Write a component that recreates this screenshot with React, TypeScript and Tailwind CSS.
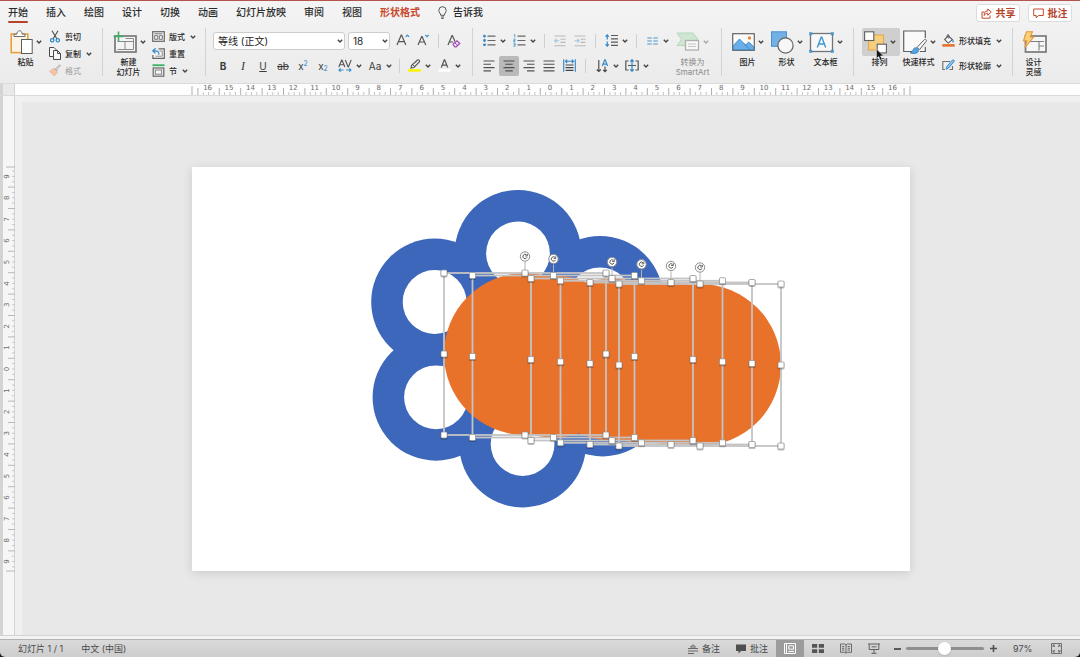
import type { ReactNode } from "react";

/* ---------- shared pieces ---------- */

function Chevron({ faded = false }: { faded?: boolean }) {
  return (
    <svg className="h-2 w-2 shrink-0" viewBox="0 0 8 8" fill="none" stroke={faded ? "#a8a8a8" : "#454545"} strokeWidth="1.4">
      <path d="M1.8 2.8 4 5.1 6.2 2.8" />
    </svg>
  );
}

function Tool({ label, active, split, children }: { label: string; active?: boolean; split?: boolean; children: ReactNode }) {
  return (
    <button type="button" aria-label={label} className={split ? "flex h-5 w-[30px] shrink-0 items-center" : "flex h-5 shrink-0 items-center"}>
      <span className={active ? "flex h-5 w-5 items-center justify-center rounded-xs bg-[#b9b9b9]" : "flex h-5 w-5 items-center justify-center"}>
        {children}
      </span>
      {split && <Chevron />}
    </button>
  );
}

function Divider() {
  return <span className="h-12 w-px shrink-0 bg-[#d3d3d3]" />;
}

function ShortDivider() {
  return <span className="h-3.5 w-px shrink-0 bg-[#cfcfcf]" />;
}

function BigTool({ label, icon, hot, split = true, muted, children }: { label: ReactNode; icon: ReactNode; hot?: boolean; split?: boolean; muted?: boolean; children?: ReactNode }) {
  return (
    <button type="button" className="relative flex w-[39px] shrink-0 flex-col items-center gap-px">
      <span className={hot ? "flex h-7 w-[38px] items-center justify-center gap-0.5 rounded-xs bg-[#cfcfcf]" : "flex h-7 w-[38px] items-center justify-center gap-0.5"}>
        {icon}
        {split && <Chevron faded={muted} />}
      </span>
      <span className={muted ? "text-[8px] leading-[10px] whitespace-nowrap text-[#8a8a8a]" : "pr-0.5 text-[8px] leading-[10px] font-medium whitespace-nowrap"}>{label}</span>
      {children}
    </button>
  );
}

function SmallTool({ label, icon, split, muted }: { label: string; icon: ReactNode; split?: boolean; muted?: boolean }) {
  return (
    <button type="button" className={muted ? "flex h-[17px] items-center gap-1 text-[8px] text-[#9a9a9a]" : "flex h-[17px] items-center gap-1 text-[8px] font-medium"}>
      {icon}
      <span className="whitespace-nowrap">{label}</span>
      {split && <Chevron />}
    </button>
  );
}

/* ---------- icons ---------- */

const PasteIcon = () => (
  <svg className="h-[25px] w-[23px]" viewBox="0 0 23 25" fill="none">
    <rect x="1.2" y="4" width="16.6" height="18.6" fill="#fbf3e6" stroke="#e9a13e" strokeWidth="1.6" />
    <path d="M4 6.500V4.200h2.800C7 2 8 .8 9.500.8s2.500 1.200 2.700 3.400H15v2.300z" fill="#fff" stroke="#6b6b6b" />
    <rect x="11.500" y="9.500" width="10.700" height="14" fill="#fff" stroke="#5b5b5b" />
  </svg>
);

const CutIcon = () => (
  <svg className="h-[13px] w-3" viewBox="0 0 12 13" fill="none">
    <path d="M3 .8 8 9M9 .8 4 9" stroke="#4c4c4c" strokeWidth="1.100" />
    <circle cx="3.200" cy="10.300" r="1.700" stroke="#2f86c8" strokeWidth="1.200" />
    <circle cx="8.800" cy="10.300" r="1.700" stroke="#2f86c8" strokeWidth="1.200" />
  </svg>
);

const CopyIcon = () => (
  <svg className="h-[13px] w-3" viewBox="0 0 12 13" fill="#f8f8f8" stroke="#4a4a4a" strokeWidth="1">
    <path d="M.5.500h4.500l2 2V9.500H.5z" />
    <path d="M4.500 3.500h4l3 3v6h-7z" />
    <path d="M8.500 3.500v3h3" fill="none" />
  </svg>
);

const BrushIcon = () => (
  <svg className="h-[13px] w-3" viewBox="0 0 12 13" fill="none">
    <path d="M.5 7.300 5 4.300l3.500 4L5.200 12Z" fill="#f3c4a8" stroke="#eab497" strokeWidth=".8" />
    <path d="m6 5 2-1.800L10.800.8l.8 1-2.800 2.500L7.800 7Z" fill="#d9d9d9" stroke="#aaa" strokeWidth=".8" />
  </svg>
);

const NewSlideIcon = () => (
  <svg className="h-[23px] w-6" viewBox="0 0 24 23" fill="none">
    <rect x="2" y="5" width="21" height="16" fill="#f4f4f4" stroke="#808080" strokeWidth="1.800" />
    <path d="M4.500 10.500h16M12 10.500v8M4.500 18.500h16v-11h-8" stroke="#8a8a8a" />
    <path d="M5.500.5v10M.5 5.500h10" stroke="#3cb163" strokeWidth="1.600" />
  </svg>
);

const LayoutIcon = () => (
  <svg className="h-[11px] w-[13px]" viewBox="0 0 13 11" fill="#f4f4f4" stroke="#666">
    <rect x=".7" y=".7" width="11.600" height="9.600" strokeWidth="1.200" />
    <path d="M2.500 2.800h8M2.700 4.700h3.100v3.600H2.700zM7.300 4.700h3.100v3.600H7.300z" strokeWidth=".9" />
  </svg>
);

const ResetIcon = () => (
  <svg className="h-[11px] w-[13px]" viewBox="0 0 13 11" fill="none">
    <path d="M6.500.9h5.800v9.400H.9V7" fill="#f4f4f4" stroke="#666" strokeWidth="1.200" />
    <path d="M7.500 3h2.800v5.200H3.500" stroke="#888" strokeWidth=".9" />
    <path d="M3.600.3.800 2.900l2.800 2.500M1 2.900h2.600C6 2.900 7 4.300 6.800 6.700" stroke="#2f86c8" strokeWidth="1.200" />
  </svg>
);

const SectionIcon = () => (
  <svg className="h-[13px] w-[13px]" viewBox="0 0 13 13" fill="none">
    <path d="M.5 1.200h12" stroke="#3cb163" strokeWidth="1.800" />
    <rect x="1.200" y="4" width="10.600" height="8.200" fill="#f4f4f4" stroke="#666" strokeWidth="1.200" />
    <rect x="3.300" y="6" width="6.400" height="4.200" stroke="#777" strokeWidth=".9" />
  </svg>
);

const ListIcon = ({ numbered = false }: { numbered?: boolean }) => (
  <svg className="h-[13px] w-[13px]" viewBox="0 0 13 13" fill="none">
    <path d="M4.500 2.200h8M4.500 6.500h8M4.500 10.800h8" stroke="#666" strokeWidth="1.200" />
    {numbered ? (
      <path d="M.8 1 1.800.6v3M.5 5.200h1.600v1.300H.7v1.300h1.500M.5 9.300h1.600v3H.5M.8 10.800h1.300" stroke="#3a8fca" strokeWidth=".8" />
    ) : (
      <path d="M.1 2.200a1.400 1.400 0 1 0 2.800 0 1.400 1.400 0 0 0-2.800 0M.1 6.500a1.400 1.400 0 1 0 2.800 0 1.400 1.400 0 0 0-2.800 0M.1 10.800a1.400 1.400 0 1 0 2.800 0 1.400 1.400 0 0 0-2.800 0" fill="#2f86c8" />
    )}
  </svg>
);

const IndentIcon = ({ out = false }: { out?: boolean }) => (
  <svg className="h-3 w-3" viewBox="0 0 12 12" fill="none">
    <path d="M.5 1h11M6.500 4.200h5M6.500 7.400h5M.5 10.700h11" stroke="#b9b9b9" strokeWidth="1.100" />
    <path d={out ? "M5.200 5.800H.8M2.500 4 .7 5.800l1.800 1.800" : "M.5 5.800h4.500M3.300 4l1.800 1.800-1.800 1.800"} stroke="#9cc6e4" strokeWidth="1.100" />
  </svg>
);

const LineSpacingIcon = () => (
  <svg className="h-[13px] w-[13px]" viewBox="0 0 13 13" fill="none">
    <path d="M6 1.500h7M6 4.800h7M6 8.100h7M6 11.400h7" stroke="#5a5a5a" strokeWidth="1.200" />
    <path d="M2.200 1v4.500M.6 2.700 2.200 1l1.600 1.700M2.200 7.500V12M.6 10.300 2.200 12l1.600-1.700" stroke="#2f86c8" strokeWidth="1.200" />
  </svg>
);

const ColumnsIcon = () => (
  <svg className="h-2 w-[11px]" viewBox="0 0 11 8" fill="none" stroke="#4a96cc" strokeWidth="1.200">
    <path d="M.3 1h4.500M.3 4h4.500M.3 7h4.500M6.300 1h4.500M6.300 4h4.500M6.300 7h4.500" />
  </svg>
);

const AlignIcon = ({ d }: { d: string }) => (
  <svg className="h-3 w-3" viewBox="0 0 12 12" fill="none" stroke="#505050" strokeWidth="1.100">
    <path d={d} />
  </svg>
);

const DistributeIcon = () => (
  <svg className="h-[13px] w-[13px]" viewBox="0 0 13 13" fill="none">
    <path d="M.7.200v12.600M12.300.200v12.600M2.500 2.300h8M4.200.6 2.400 2.300l1.800 1.800M8.800.6l1.800 1.700-1.800 1.800" stroke="#2f86c8" strokeWidth="1.100" />
    <path d="M2.500 6h8M2.500 8.700h8M2.500 11.400h8" stroke="#444" strokeWidth="1.200" />
  </svg>
);

const TextDirectionIcon = () => (
  <svg className="h-[14px] w-3" viewBox="0 0 12 14" fill="none">
    <path d="M2.800 1v11.500M.8 10.500l2 2 2-2M9 7.500v5M7.200 10.800 9 12.600l1.800-1.800" stroke="#444" strokeWidth="1.100" />
    <path d="M6.300 7 8.700.9h.5L11.600 7M7 5.100h3.800" stroke="#2f86c8" strokeWidth="1.100" />
  </svg>
);

const AlignTextIcon = () => (
  <svg className="h-[13px] w-[14px]" viewBox="0 0 14 13" fill="none">
    <path d="M3.500 2H.8v9h2.700M10.500 2h2.700v9h-2.700M3 6.500h8" stroke="#555" strokeWidth="1.200" />
    <path d="M7 .8v11.400M5.300 2.500 7 .8l1.700 1.700M5.300 10.500 7 12.200l1.700-1.700" stroke="#2f86c8" strokeWidth="1.200" />
  </svg>
);

const SmartArtIcon = () => (
  <svg className="h-5 w-6" viewBox="0 0 24 20" fill="none">
    <path d="M1 1h16l5 6.500-5 6H1L5.500 7.500z" fill="#cfe6d2" stroke="#b5d8bb" />
    <rect x="9.500" y="8.500" width="13" height="9.500" fill="#f7f7f7" stroke="#b0b0b0" strokeWidth="1.300" />
    <path d="M12 12h8M12 14.500h8" stroke="#c4c4c4" />
  </svg>
);

const PictureIcon = () => (
  <svg className="h-[18px] w-[23px]" viewBox="0 0 23 18" fill="none">
    <rect x=".7" y=".7" width="21.600" height="16.600" fill="#fbfbfb" stroke="#646464" strokeWidth="1.200" />
    <path d="M1.300 12.500 7.500 6l6 6 3.300-3 4.900 4.800v2.900H1.300z" fill="#69aee6" stroke="#2f7fc0" strokeWidth=".8" />
    <path d="m12 10.500 5.500 6" stroke="#2f7fc0" strokeWidth=".8" />
    <circle cx="17.500" cy="5" r="1.700" fill="#ef8b3c" />
  </svg>
);

const ShapesIcon = () => (
  <svg className="h-[23px] w-[23px]" viewBox="0 0 23 23">
    <rect x=".5" y=".8" width="15" height="14.500" fill="#72b0e6" stroke="#4a90d0" />
    <circle cx="14.500" cy="14.500" r="7.600" fill="#f7f7f7" stroke="#646464" strokeWidth="1.200" />
  </svg>
);

const TextBoxIcon = () => (
  <svg className="h-[21px] w-[25px]" viewBox="0 0 25 21" fill="none">
    <rect x="1.500" y="1.500" width="22" height="18" fill="#f8f8f8" stroke="#747474" strokeWidth="1.300" />
    <path d="M.2.200h3v3h-3zM21.800.200h3v3h-3zM.2 17.800h3v3h-3zM21.800 17.800h3v3h-3z" fill="#4a96cc" />
    <path d="M8.300 15.500 12.200 5.300h.6l3.900 10.200M9.700 12h5.600" stroke="#3f95cf" strokeWidth="1.400" />
  </svg>
);

const ArrangeIcon = () => (
  <svg className="h-[23px] w-[23px]" viewBox="0 0 23 23" strokeWidth="1.100">
    <rect x="4.500" y="4" width="15" height="15" fill="#f5cf7f" stroke="#eaa64a" />
    <rect x=".6" y=".8" width="9.200" height="8.700" fill="#fdfdfd" stroke="#606060" />
    <rect x="13.200" y="13.200" width="9.200" height="8.700" fill="#fdfdfd" stroke="#606060" />
  </svg>
);

const QuickStyleIcon = () => (
  <svg className="h-6 w-6" viewBox="0 0 24 24" fill="none">
    <path d="M9 21.500H.7V1h21.600v7M22.300 17v4.500H17" fill="#fafafa" stroke="#606060" strokeWidth="1.200" />
    <path d="M22.800 9.500c.9.700.7 1.400.2 2.100l-6.500 8-2.600-2.100 7-7.400c.6-.6 1.200-1 1.900-.6z" fill="#f7f7f7" stroke="#606060" />
    <path d="M7 22.800c2.200-.2 2.600-1.800 3.300-3.500.8-1.700 2.600-2 4-.9 1.700 1.400 1.700 3.100.2 4.200-2 1.400-5.200 1.300-7.500.2z" fill="#5aa2de" stroke="#2f7fc0" strokeWidth=".8" />
  </svg>
);

const FillIcon = () => (
  <svg className="h-[13px] w-[13px]" viewBox="0 0 13 13" fill="none">
    <path d="m6.300 1.800 4 3.800-4 3.500-3.600-3.500z" fill="#fafafa" stroke="#555" strokeWidth="1.100" />
    <path d="M6.800 4.500V1.300c0-.9-1.600-.9-1.600 0v2" stroke="#555" strokeWidth=".9" />
    <path d="M10.800 5c1.200 1.700 1.300 3.400.2 3.600-1-.1-.9-1.500-.2-3.600z" fill="#2f86c8" />
    <path d="M.3 11.400h12.400" stroke="#e8722a" strokeWidth="2.600" />
  </svg>
);

const OutlineIcon = () => (
  <svg className="h-[13px] w-[13px]" viewBox="0 0 13 13" fill="none">
    <path d="M8 2.500H.8v8H3M10.500 7v3.500H7.500" stroke="#707070" strokeWidth="1.100" />
    <path d="m4 10.300.9-2.900L10.500 1c.8-.6 2.200.5 1.600 1.500L6.700 8.900z" fill="#8cc2ec" stroke="#2f86c8" strokeWidth=".9" />
  </svg>
);

const IdeasIcon = () => (
  <svg className="h-[23px] w-[25px]" viewBox="0 0 25 23" fill="none">
    <rect x="3.500" y="5" width="20.500" height="16" fill="#f6f6f6" stroke="#808080" strokeWidth="1.800" />
    <path d="M5 10.500h17M17 10.500v9M17 15h5" stroke="#808080" strokeWidth="1.100" />
    <path d="M4.500.8h6L8.200 6h3.500L3 16.500 4.800 9.800H1.500z" fill="#fad27e" stroke="#e9973a" strokeWidth="1.100" />
  </svg>
);

const HighlighterIcon = () => (
  <svg className="h-[13px] w-[13px]" viewBox="0 0 13 13" fill="none">
    <path d="m3 9 .6-2.600L9.500 1c1-.8 2.700.7 1.800 1.900L6 8.500z" fill="#e8e8e8" stroke="#555" strokeWidth="1.100" />
    <path d="M4.500 5.500 7 7.800" stroke="#555" />
    <path d="M.2 11.400h12.600" stroke="#fdf500" strokeWidth="2.600" />
  </svg>
);

const FontColorIcon = () => (
  <svg className="h-[13px] w-[13px]" viewBox="0 0 13 13" fill="none">
    <path d="M3.300 8.500 6.300.8h.4l3 7.700M4.400 6.200h4.200" stroke="#555" strokeWidth="1.200" />
    <path d="M.5 11.400h12" stroke="#fff" strokeWidth="2.600" />
  </svg>
);

const GrowIcon = ({ down = false }: { down?: boolean }) => (
  <svg className="h-[13px] w-[14px]" viewBox="0 0 14 13" fill="none">
    <path d={down ? "M2 11 5.700 2.500h.4L9.800 11M3.400 8h5" : "M1 11 5.200 1h.4l4.200 10M2.600 7.700h5.700"} stroke="#555" strokeWidth="1.200" />
    <path d={down ? "m9.300 1 1.700 1.700L12.700 1" : "M9.700 2.800 11.400 1l1.700 1.800"} stroke="#3a8fca" strokeWidth="1.200" />
  </svg>
);

const ClearFormatIcon = () => (
  <svg className="h-[14px] w-[14px]" viewBox="0 0 14 14" fill="none">
    <path d="M1 11 5 1.500h.4L8 7.500M2.500 8h3.800" stroke="#555" strokeWidth="1.200" />
    <path d="m6 10.300 4-3.500 2.800 2.700-3.600 3.300H7.800z" fill="#f3e3f7" stroke="#a24fb8" strokeWidth="1.200" />
    <path d="m7.800 8.800 3 2.800" stroke="#a24fb8" />
  </svg>
);

const SpacingIcon = () => (
  <svg className="h-[13px] w-[14px]" viewBox="0 0 14 13" fill="none">
    <path d="M.8 8 3.700 1h.3l2.900 7M1.900 5.800h3.900M7.300 1l2.800 7h.3l2.800-7" stroke="#555" strokeWidth="1.100" />
    <path d="M1 11h4.500M2.600 9.300.9 11l1.700 1.700M8 11h5M11.300 9.300 13 11l-1.700 1.700" stroke="#3a8fca" strokeWidth="1.100" />
  </svg>
);

const BulbIcon = () => (
  <svg className="h-[13px] w-[9px]" viewBox="0 0 9 13" fill="none" stroke="#555">
    <path d="M2.700 9.300C2.700 7.200.8 6.700.8 4.400a3.700 3.700 0 0 1 7.400 0c0 2.300-1.900 2.800-1.900 4.900zM3 11h3M3.300 12.400h2.400" />
  </svg>
);

const ShareIcon = () => (
  <svg className="h-[11px] w-[11px]" viewBox="0 0 11 11" fill="none" stroke="#c2492e">
    <path d="M3.500 4H1v6.200h8V7.500" />
    <path d="M6.800 1v1.900C4 3.200 3 5 3.200 7.500 4 5.900 5 5.300 6.800 5.300v2L10.300 4z" />
  </svg>
);

const CommentIcon = () => (
  <svg className="h-[11px] w-[11px]" viewBox="0 0 11 11" fill="none" stroke="#c2492e">
    <path d="M.7 1h9.600v6.500H5.600L3.200 9.800V7.500H.7z" />
  </svg>
);

const PointerIcon = () => (
  <svg className="absolute top-5 left-[14px] h-3.5 w-2.5" viewBox="0 0 10 14">
    <path d="M1.500 1v9.500l2.200-2 1.500 3.700 1.800-.8-1.500-3.500h3z" fill="#111" stroke="#ddd" strokeWidth=".6" />
  </svg>
);

/* ---------- ribbon ---------- */

const tabs = ["开始", "插入", "绘图", "设计", "切换", "动画", "幻灯片放映", "审阅", "视图"];

function TabBar() {
  return (
    <header className="flex h-[23px] items-start justify-between pt-[3px] pr-2">
      <nav className="flex items-center gap-[18px] pl-2 text-[10px] leading-4 font-medium text-[#2a2a2a]">
        {tabs.map((tab, index) => (
          <a key={tab} href={`#${tab}`} className="relative whitespace-nowrap">
            {tab}
            {index === 0 && <span className="absolute inset-x-0 top-[17px] h-0.5 rounded-full bg-[#b5432a]" />}
          </a>
        ))}
        <a href="#format" className="font-bold whitespace-nowrap text-[#c9472b]">形状格式</a>
        <button type="button" className="flex items-center gap-1.5 whitespace-nowrap">
          <BulbIcon />
          告诉我
        </button>
      </nav>
      <div className="flex gap-2 text-[10px] leading-4 font-bold text-[#b5432a]">
        <button type="button" className="flex h-[18px] w-11 items-center justify-center gap-1 rounded-[3px] border border-[#dcdcdc] bg-white">
          <ShareIcon />
          共享
        </button>
        <button type="button" className="flex h-[18px] w-11 items-center justify-center gap-1 rounded-[3px] border border-[#dcdcdc] bg-white">
          <CommentIcon />
          批注
        </button>
      </div>
    </header>
  );
}

function Picker({ label, value, wide }: { label: string; value: string; wide?: boolean }) {
  return (
    <span className={wide ? "relative flex w-[132px] items-center" : "relative flex w-[42px] items-center"}>
      <select aria-label={label} defaultValue={value} className="h-[18px] w-full appearance-none rounded-[3px] border border-[#cdcdcd] bg-white pr-3 pl-1 text-[10px] leading-4 text-[#222]">
        <option>{value}</option>
      </select>
      <span className="pointer-events-none absolute right-px flex">
        <Chevron />
      </span>
    </span>
  );
}

function FontGroup() {
  return (
    <div className="flex w-[266px] shrink-0 flex-col pl-[7px] text-[#3c3c3c]">
      <div className="flex h-[25px] items-center">
        <div className="flex gap-[3px]">
          <Picker label="字体" value="等线 (正文)" wide />
          <Picker label="字号" value="18" />
        </div>
        <div className="flex items-center pl-[3px]">
          <Tool label="增大字号"><GrowIcon /></Tool>
          <Tool label="减小字号"><GrowIcon down /></Tool>
        </div>
        <div className="flex items-center gap-[5px] pl-[5px]">
          <ShortDivider />
          <Tool label="清除格式"><ClearFormatIcon /></Tool>
        </div>
      </div>
      <div className="flex h-[25px] items-center text-[10px] leading-4">
        <div className="flex">
          <Tool label="加粗"><b>B</b></Tool>
          <Tool label="倾斜"><i className="font-['Liberation_Serif'] text-[12px]">I</i></Tool>
          <Tool label="下划线"><u>U</u></Tool>
          <Tool label="删除线"><s>ab</s></Tool>
          <Tool label="上标"><span>x<sup className="text-[7px] text-[#2f86c8]">2</sup></span></Tool>
          <Tool label="下标"><span>x<sub className="text-[7px] text-[#2f86c8]">2</sub></span></Tool>
        </div>
        <div className="flex pl-0.5">
          <Tool label="字符间距" split><SpacingIcon /></Tool>
          <Tool label="更改大小写" split>Aa</Tool>
        </div>
        <div className="flex items-center gap-1 pl-1">
          <ShortDivider />
          <div className="flex">
            <Tool label="突出显示" split><HighlighterIcon /></Tool>
            <Tool label="字体颜色" split><FontColorIcon /></Tool>
          </div>
        </div>
      </div>
    </div>
  );
}

function ParagraphGroup() {
  return (
    <div className="flex w-[248px] shrink-0 pl-1.5">
      <div className="flex w-[194px] flex-col">
        <div className="flex h-[25px] items-center gap-[5px]">
          <div className="flex">
            <Tool label="项目符号" split><ListIcon /></Tool>
            <Tool label="编号" split><ListIcon numbered /></Tool>
          </div>
          <ShortDivider />
          <div className="flex">
            <Tool label="减少缩进"><IndentIcon out /></Tool>
            <Tool label="增加缩进"><IndentIcon /></Tool>
          </div>
          <ShortDivider />
          <Tool label="行距" split><LineSpacingIcon /></Tool>
          <ShortDivider />
          <Tool label="分栏" split><ColumnsIcon /></Tool>
        </div>
        <div className="flex h-[25px] items-center gap-1.5">
          <div className="flex">
            <Tool label="左对齐"><AlignIcon d="M.5 1h11M.5 4.300h7.500M.5 7.600h11M.5 10.900h7.500" /></Tool>
            <Tool label="居中" active><AlignIcon d="M.5 1h11M2.300 4.300h7.400M.5 7.600h11M2.300 10.900h7.400" /></Tool>
            <Tool label="右对齐"><AlignIcon d="M.5 1h11M4 4.300h7.500M.5 7.600h11M4 10.900h7.500" /></Tool>
            <Tool label="两端对齐"><AlignIcon d="M.5 1h11M.5 4.300h11M.5 7.600h11M.5 10.900h11" /></Tool>
            <Tool label="分散对齐"><DistributeIcon /></Tool>
          </div>
          <ShortDivider />
          <div className="flex">
            <Tool label="文字方向" split><TextDirectionIcon /></Tool>
            <Tool label="对齐文本" split><AlignTextIcon /></Tool>
          </div>
        </div>
      </div>
      <BigTool muted icon={<SmartArtIcon />} label={<>转换为<br />SmartArt</>} />
    </div>
  );
}

function Ribbon() {
  return (
    <div className="flex overflow-hidden py-1 pr-4 text-[#262626]">
      <div className="flex w-[102px] shrink-0 pl-[7px]">
        <BigTool icon={<PasteIcon />} label="粘贴" />
        <div className="flex flex-col pl-[3px]">
          <SmallTool icon={<CutIcon />} label="剪切" />
          <SmallTool icon={<CopyIcon />} label="复制" split />
          <SmallTool icon={<BrushIcon />} label="格式" muted />
        </div>
      </div>
      <Divider />
      <div className="flex w-[102px] shrink-0 pl-[7px]">
        <BigTool icon={<NewSlideIcon />} label={<>新建<br />幻灯片</>} />
        <div className="flex flex-col pl-[3px]">
          <SmallTool icon={<LayoutIcon />} label="版式" split />
          <SmallTool icon={<ResetIcon />} label="重置" />
          <SmallTool icon={<SectionIcon />} label="节" split />
        </div>
      </div>
      <Divider />
      <FontGroup />
      <Divider />
      <ParagraphGroup />
      <Divider />
      <div className="flex w-[131px] shrink-0 pl-[7px]">
        <BigTool icon={<PictureIcon />} label="图片" />
        <BigTool icon={<ShapesIcon />} label="形状" />
        <BigTool icon={<TextBoxIcon />} label="文本框" />
      </div>
      <Divider />
      <div className="flex w-[158px] shrink-0 pl-[7px]">
        <BigTool icon={<ArrangeIcon />} label="排列" hot>
          <PointerIcon />
        </BigTool>
        <BigTool icon={<QuickStyleIcon />} label="快速样式" />
        <div className="flex flex-col gap-2 pt-1 pl-[3px]">
          <SmallTool icon={<FillIcon />} label="形状填充" split />
          <SmallTool icon={<OutlineIcon />} label="形状轮廓" split />
        </div>
      </div>
      <Divider />
      <div className="flex shrink-0 pl-0.5">
        <BigTool icon={<IdeasIcon />} label={<>设计<br />灵感</>} split={false} />
      </div>
    </div>
  );
}

/* ---------- rulers ---------- */

const CM = 21.4;

function TopRuler() {
  const marks = Array.from({ length: 33 }, (_, i) => i - 16);
  const ticks = Array.from({ length: 133 }, (_, i) => (i - 66) / 4);
  return (
    <svg className="h-[11px] w-[720px] shrink-0 font-['DejaVu_Sans']" viewBox="-360 0 720 11">
      {ticks.map((t) => {
        const major = Math.abs(t * 2) % 2 === 1;
        return <path key={t} d={`M${t * CM} ${major ? 4 : 8}V11`} stroke={major ? "#b0b0b0" : "#c4c4c4"} />;
      })}
      <path d="M-359 2V11M359 2V11" stroke="#b0b0b0" />
      {marks.map((m) => (
        <text key={m} x={m * CM - 1} y="6" textAnchor="middle" fontSize="7" fill="#6c6c6c">{Math.abs(m)}</text>
      ))}
    </svg>
  );
}

function SideRuler() {
  const marks = Array.from({ length: 19 }, (_, i) => i - 9);
  const ticks = Array.from({ length: 75 }, (_, i) => (i - 37) / 4);
  return (
    <svg className="h-[406px] w-[18px] shrink-0 font-['DejaVu_Sans']" viewBox="0 -203 18 406">
      {ticks.map((t) => {
        const major = Math.abs(t * 2) % 2 === 1;
        return <path key={t} d={`M${major ? 5 : 9} ${t * CM}H12`} stroke={major ? "#b8b8b8" : "#c8c8c8"} />;
      })}
      <path d="M3 -202H15M3 202H15" stroke="#b8b8b8" />
      {marks.map((m) => (
        <text key={m} transform={`translate(6 ${m * CM}) rotate(-90)`} textAnchor="middle" fontSize="7" fill="#6c6c6c">{Math.abs(m)}</text>
      ))}
    </svg>
  );
}

/* ---------- slide drawing ---------- */

const petals = [
  [518, 253.4], [434.6, 302], [436, 397.3], [522.6, 444], [602.5, 393], [600, 299.3],
];

const discs = [
  [525, 354], [553.5, 356.5], [612, 359.5], [641.5, 361.800], [671, 363.500], [700, 365],
];

const R = 81;

function Grip({ x, y }: { x: number; y: number }) {
  return (
    <g>
      <rect x={x - 3.500} y={y - 3} width="7" height="7.500" rx="1" fill="#000" opacity=".25" />
      <rect x={x - 3} y={y - 3} width="6" height="6" rx="1" fill="#fff" stroke="#909090" strokeWidth=".7" />
    </g>
  );
}

function Slide() {
  return (
    <svg className="h-[404px] w-[718px] shrink-0 bg-white shadow-[0_2px_10px_rgba(0,0,0,0.12)]" viewBox="192 167 718 404" role="img" aria-label="幻灯片">
      {petals.map(([x, y]) => <circle key={x} cx={x} cy={y} r="63.400" fill="#3c67bb" />)}
      {petals.map(([x, y]) => <circle key={x} cx={x} cy={y} r="31.900" fill="#fff" />)}
      {discs.map(([x, y]) => <circle key={x} cx={x} cy={y} r={R} fill="#e8722a" />)}
      {discs.map(([x, y]) => (
        <g key={x}>
          <rect x={x - R} y={y - R} width={R * 2} height={R * 2} fill="none" stroke="#c4c4c4" strokeWidth="1.800" />
          <path d={`M${x} ${y - R}v-11`} stroke="#b4b4b4" />
        </g>
      ))}
      {discs.map(([x, y]) => (
        <g key={x}>
          {[-R, 0, R].map((dx) =>
            [-R, 0, R].map((dy) => (dx === 0 && dy === 0 ? null : <Grip key={`${dx} ${dy}`} x={x + dx} y={y + dy} />)),
          )}
          <circle cx={x} cy={y - R - 16.500} r="4.700" fill="#fff" stroke="#8c8c8c" />
          <g transform={`translate(${x} ${y - R - 16.500})`} fill="none" stroke="#555">
            <path d="M1.500-1.700A2.200 2.200 0 1 0 2.100.8" />
            <path d="M2.300-2.700V-.5H.1" strokeWidth=".9" />
          </g>
        </g>
      ))}
    </svg>
  );
}

/* ---------- status bar ---------- */

function StatusBar() {
  return (
    <footer className="flex h-[18px] items-center justify-between overflow-hidden rounded-b-[5px] border-t border-[#b2b2b2] bg-linear-to-b from-[#dadada] to-[#cdcdcd] pr-[18px] pl-[18px] text-[9px] leading-3 text-[#4a4a4a]">
      <div className="flex gap-[18px] whitespace-nowrap">
        <span>幻灯片 1 / 1</span>
        <button type="button">中文 (中国)</button>
      </div>
      <div className="flex h-full items-center">
        <button type="button" className="mr-4 flex items-center gap-1">
          <svg className="h-2.5 w-2.5" viewBox="0 0 10 10" fill="none" stroke="#666"><path d="M0 4.500h10M0 7h10M0 9.500h6M2.500 3 5 .8 7.500 3z" /></svg>
          备注
        </button>
        <button type="button" className="mr-2 flex items-center gap-1">
          <svg className="h-2.5 w-2.5" viewBox="0 0 10 10" fill="#4f4f4f"><path d="M0 .5h10v6.500H5L2.500 9.500V7H0z" /></svg>
          批注
        </button>
        <button type="button" aria-label="普通视图" className="flex h-full w-7 items-center justify-center bg-[#9c9c9c]">
          <svg className="h-[11px] w-3" viewBox="0 0 12 11" fill="none" stroke="#fff"><path d="M.5.500h11v10H.5zM2.500.5v10M4.800 2.800h4.700v3.400H4.800zM4.500 8.500h5.500" /></svg>
        </button>
        <button type="button" aria-label="幻灯片浏览" className="flex h-full w-7 items-center justify-center">
          <svg className="h-[9px] w-3" viewBox="0 0 12 9" fill="#555"><path d="M0 0h5.200v3.700H0zM6.800 0H12v3.700H6.800zM0 5.300h5.200V9H0zM6.800 5.300H12V9H6.800z" /></svg>
        </button>
        <button type="button" aria-label="阅读视图" className="flex h-full w-7 items-center justify-center">
          <svg className="h-[11px] w-3" viewBox="0 0 12 11" fill="none" stroke="#606060"><path d="M.5 1h4.300L6 2l1.200-1h4.300v8.300H7.200L6 10.300l-1.200-1H.5zM6 2v8M2 3.500h2.300M2 5.300h2.300M2 7.100h2.300M7.700 3.500H10M7.700 5.300H10M7.700 7.100H10" strokeWidth=".9" /></svg>
        </button>
        <button type="button" aria-label="幻灯片放映" className="flex h-full w-7 items-center justify-center">
          <svg className="h-[11px] w-3" viewBox="0 0 12 11" fill="none" stroke="#606060"><path d="M0 1h12M1.200 1v5.500h9.600V1M6 6.500V10M3.500 10.300h5M3.500 3.800h5" /></svg>
        </button>
        <button type="button" aria-label="缩小" className="ml-1.5 flex h-full w-2.5 items-center"><span className="h-0.5 w-[7px] bg-[#5a5a5a]" /></button>
        <input
          type="range"
          aria-label="缩放"
          min="0"
          max="100"
          defaultValue="49"
          className="mx-0.5 h-3 w-[78px] appearance-none bg-transparent [&::-webkit-slider-runnable-track]:h-[3px] [&::-webkit-slider-runnable-track]:rounded-full [&::-webkit-slider-runnable-track]:bg-[#8f8f8f] [&::-webkit-slider-thumb]:-mt-[5px] [&::-webkit-slider-thumb]:size-[13px] [&::-webkit-slider-thumb]:appearance-none [&::-webkit-slider-thumb]:rounded-full [&::-webkit-slider-thumb]:bg-white [&::-webkit-slider-thumb]:shadow"
        />
        <button type="button" aria-label="放大" className="mr-4 ml-1">
          <svg className="h-[7px] w-[7px]" viewBox="0 0 7 7" stroke="#4f4f4f" strokeWidth="1.600"><path d="M3.500 0v7M0 3.500h7" /></svg>
        </button>
        <span className="w-[38px]">97%</span>
        <button type="button" aria-label="适应窗口">
          <svg className="h-[11px] w-[11px]" viewBox="0 0 11 11" fill="none" stroke="#666"><path d="M.5.500h10v10H.5zM2 2l2 2M9 2 7 4M2 9l2-2M9 9 7 7M2 4V2h2M7 2h2v2M9 7v2H7M4 9H2V7" strokeWidth=".9" /></svg>
        </button>
      </div>
    </footer>
  );
}

export default function App() {
  return (
    <div className="flex min-h-screen flex-col bg-[#1c1c1c] font-[Inter,'Noto_Sans_CJK_SC',sans-serif]">
      <div className="border-t border-[#b5544a] bg-linear-to-b from-[#f4f4f4] to-[#ebebeb]">
        <TabBar />
        <Ribbon />
      </div>
      <div className="flex h-[13px] overflow-hidden border-y border-[#dadada] bg-[#fdfdfd]">
        <div className="w-[15px] shrink-0 border-r border-l-[3px] border-[#d4d4d4] bg-[#e9e9e9]" />
        <div className="flex flex-1 justify-center pl-[7px]">
          <TopRuler />
        </div>
      </div>
      <div className="flex flex-1 bg-[#e8e8e8]">
        <div className="flex w-[15px] shrink-0 items-center border-r border-l-[3px] border-[#d4d4d4] bg-[#f6f6f6] pt-1.5">
          <SideRuler />
        </div>
        <main className="flex flex-1 items-center justify-center border-t-[6px] border-l-[7px] border-[#f0f0f0]">
          <Slide />
        </main>
      </div>
      <div className="h-1 border-t border-[#d4d4d4] bg-[#f3f3f3]" />
      <StatusBar />
    </div>
  );
}
